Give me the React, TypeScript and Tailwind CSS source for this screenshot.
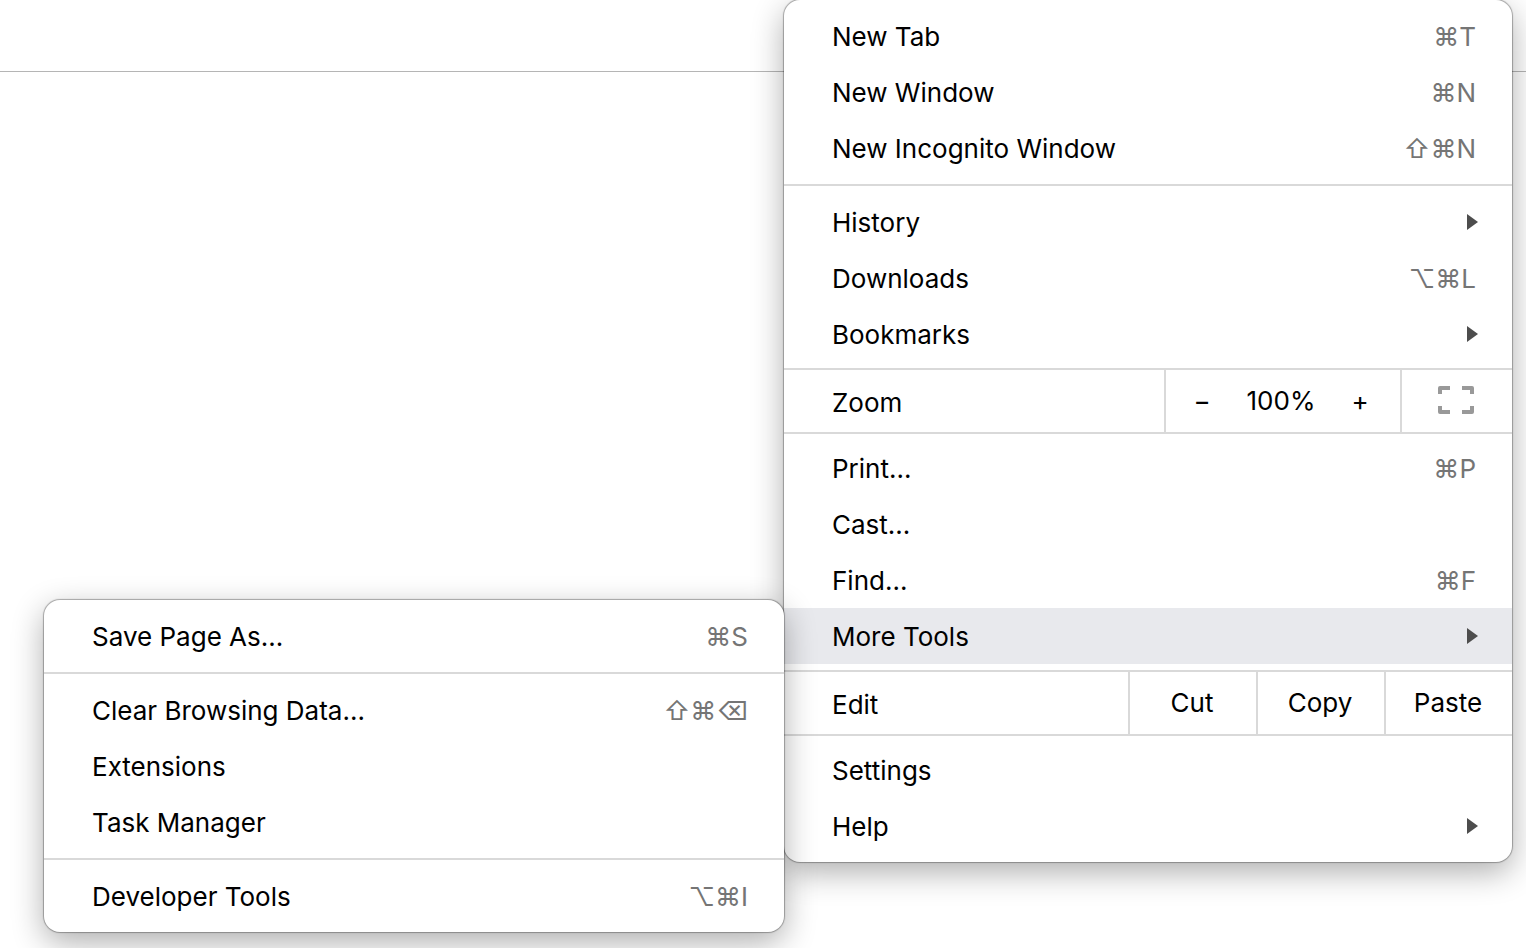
import type { ReactNode } from "react";

type ItemProps = {
  label: string;
  shortcut?: string;
  submenu?: ReactNode;
  hasSubmenu?: boolean;
};

const panel =
  "rounded-[16px] bg-white py-2 shadow-[0_0_1px_1px_rgba(0,0,0,0.3),0_10px_32px_rgba(0,0,0,0.32)]";

function Arrow() {
  return (
    <svg className="-mr-0.5 h-4 w-3" viewBox="0 0 12 16" aria-hidden="true">
      <path d="M1 0 12 8 1 16Z" fill="#4d4d4d" />
    </svg>
  );
}

function Item({ label, shortcut, submenu, hasSubmenu }: ItemProps) {
  return (
    <li className="relative" role="none">
      <button
        type="button"
        role="menuitem"
        aria-haspopup={hasSubmenu || submenu ? "menu" : undefined}
        className={
          submenu
            ? "flex h-14 w-full items-center justify-between bg-[#e8e9ed] pr-9 pl-12 text-left"
            : "flex h-14 w-full items-center justify-between pr-9 pl-12 text-left"
        }
      >
        <span className="pt-0.5">{label}</span>
        {shortcut && <span className="pt-0.5 text-[#757575]">{shortcut}</span>}
        {(hasSubmenu || submenu) && <Arrow />}
      </button>
      {submenu}
    </li>
  );
}

function Separator() {
  return <li role="separator" className="my-2 h-0.5 bg-[#d9d9d9]" />;
}

function MoreTools() {
  return (
    <ul role="menu" aria-label="More Tools" className={`absolute -top-2 right-full w-[740px] ${panel}`}>
      <Item label="Save Page As..." shortcut="⌘S" />
      <Separator />
      <Item label="Clear Browsing Data..." shortcut="⇧⌘⌫" />
      <Item label="Extensions" />
      <Item label="Task Manager" />
      <Separator />
      <Item label="Developer Tools" shortcut="⌥⌘I" />
    </ul>
  );
}

function ZoomRow() {
  return (
    <li role="none" className="my-1.5 flex h-[66px] border-y-2 border-[#d9d9d9]">
      <span className="flex flex-1 items-center pt-1 pl-12">Zoom</span>
      <div className="flex w-[236px] items-center justify-between border-l-2 border-[#d9d9d9] pr-7 pl-6">
        <button type="button" aria-label="Zoom out" className="w-6 text-center">
          −
        </button>
        <span>100%</span>
        <button type="button" aria-label="Zoom in" className="w-6 text-center">
          +
        </button>
      </div>
      <button
        type="button"
        aria-label="Full screen"
        className="flex w-28 items-center justify-center border-l-2 border-[#d9d9d9] pr-0.5 pb-0.5"
      >
        <svg className="h-7 w-9" viewBox="0 0 36 28" fill="#999" aria-hidden="true">
          <path d="M2 0H12V4H4V8H0V2A2 2 0 0 1 2 0Z" />
          <path d="M34 0H24V4H32V8H36V2A2 2 0 0 0 34 0Z" />
          <path d="M2 28H12V24H4V20H0V26A2 2 0 0 0 2 28Z" />
          <path d="M34 28H24V24H32V20H36V26A2 2 0 0 1 34 28Z" />
        </svg>
      </button>
    </li>
  );
}

function EditRow() {
  return (
    <li role="none" className="my-1.5 flex h-[66px] border-y-2 border-[#d9d9d9]">
      <span className="flex flex-1 items-center pt-1 pl-12">Edit</span>
      {["Cut", "Copy", "Paste"].map((action) => (
        <button
          key={action}
          type="button"
          role="menuitem"
          className="w-32 border-l-2 border-[#d9d9d9] pr-0.5 text-center"
        >
          {action}
        </button>
      ))}
    </li>
  );
}

export default function App() {
  return (
    <div className="relative min-h-screen overflow-hidden bg-white font-['Inter',sans-serif] text-[26px] leading-8 text-black">
      <header className="h-[72px] border-b border-[#b5b5b5]" />
      <ul role="menu" aria-label="Browser menu" className={`absolute top-0 right-3.5 w-[728px] ${panel}`}>
        <Item label="New Tab" shortcut="⌘T" />
        <Item label="New Window" shortcut="⌘N" />
        <Item label="New Incognito Window" shortcut="⇧⌘N" />
        <Separator />
        <Item label="History" hasSubmenu />
        <Item label="Downloads" shortcut="⌥⌘L" />
        <Item label="Bookmarks" hasSubmenu />
        <ZoomRow />
        <Item label="Print..." shortcut="⌘P" />
        <Item label="Cast..." />
        <Item label="Find..." shortcut="⌘F" />
        <Item label="More Tools" submenu={<MoreTools />} />
        <EditRow />
        <Item label="Settings" />
        <Item label="Help" hasSubmenu />
      </ul>
    </div>
  );
}
